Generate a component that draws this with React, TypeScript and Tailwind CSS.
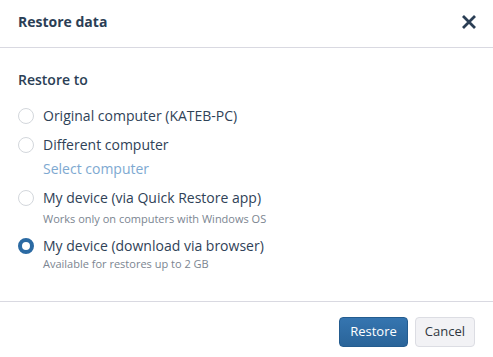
import React from 'react';

type Option = {
  label: string;
  hint?: string;
  link?: string;
  checked?: boolean;
};

const options: Option[] = [
  { label: 'Original computer (KATEB-PC)' },
  { label: 'Different computer', link: 'Select computer' },
  { label: 'My device (via Quick Restore app)', hint: 'Works only on computers with Windows OS' },
  { label: 'My device (download via browser)', hint: 'Available for restores up to 2 GB', checked: true },
];

function Radio({ checked }: { checked?: boolean }) {
  if (checked) {
    return <span className="block h-4 w-4 shrink-0 rounded-full border-[4px] border-[#2b6aa3] bg-white" />;
  }
  return <span className="block h-4 w-4 shrink-0 rounded-full border border-[#d3d7dc] bg-white" />;
}

export default function App() {
  return (
    <div
      className="flex h-[357px] w-[493px] flex-col bg-white text-[#2f4257]"
      style={{ fontFamily: '"Open Sans", "Liberation Sans", sans-serif' }}
    >
      <header className="flex h-12 items-center justify-between border-b border-[#d9d9e1] pl-[18px] pr-4">
        <h1 className="mb-1 text-[14px] font-bold text-[#2b3e55]">Restore data</h1>
        <button className="mb-1 text-[#2b3e55]">
          <svg width="16" height="16" viewBox="0 0 16 16" fill="none">
            <path d="M2 2L14 14M14 2L2 14" stroke="currentColor" strokeWidth="2.8" strokeLinecap="butt" />
          </svg>
        </button>
      </header>

      <main className="flex-1 pl-[18px] pt-[22px]">
        <h2 className="text-[14px] font-semibold leading-5 text-[#2b3e55]">Restore to</h2>
        <div className="mt-[16px] flex flex-col">
          {options.map((o) => (
            <div key={o.label} className="mb-[9px]">
              <label className="flex h-5 items-center gap-[9px]">
                <Radio checked={o.checked} />
                <span className="text-[14px] leading-5">{o.label}</span>
              </label>
              {o.link && (
                <a className="ml-[25px] mt-[4px] block text-[14px] leading-5 text-[#7ea9d1]">{o.link}</a>
              )}
              {o.hint && (
                <p className={`ml-[25px] text-[11px] leading-4 text-[#7b8591] ${o.checked ? 'mt-0' : 'mt-[3px]'}`}>
                  {o.hint}
                </p>
              )}
            </div>
          ))}
        </div>
      </main>

      <footer className="flex h-[56px] items-center justify-end gap-[7px] border-t border-[#d9d9e1] pr-[18px] pt-1">
        <button className="h-[30px] rounded-[4px] border border-[#245c8f] bg-gradient-to-b from-[#3575b0] to-[#2a6499] px-[10px] text-[13px] text-white">
          Restore
        </button>
        <button className="h-[30px] rounded-[4px] border border-[#dcdde3] bg-[#f2f2f5] px-[9px] text-[13px] text-[#2f3640]">
          Cancel
        </button>
      </footer>
    </div>
  );
}
